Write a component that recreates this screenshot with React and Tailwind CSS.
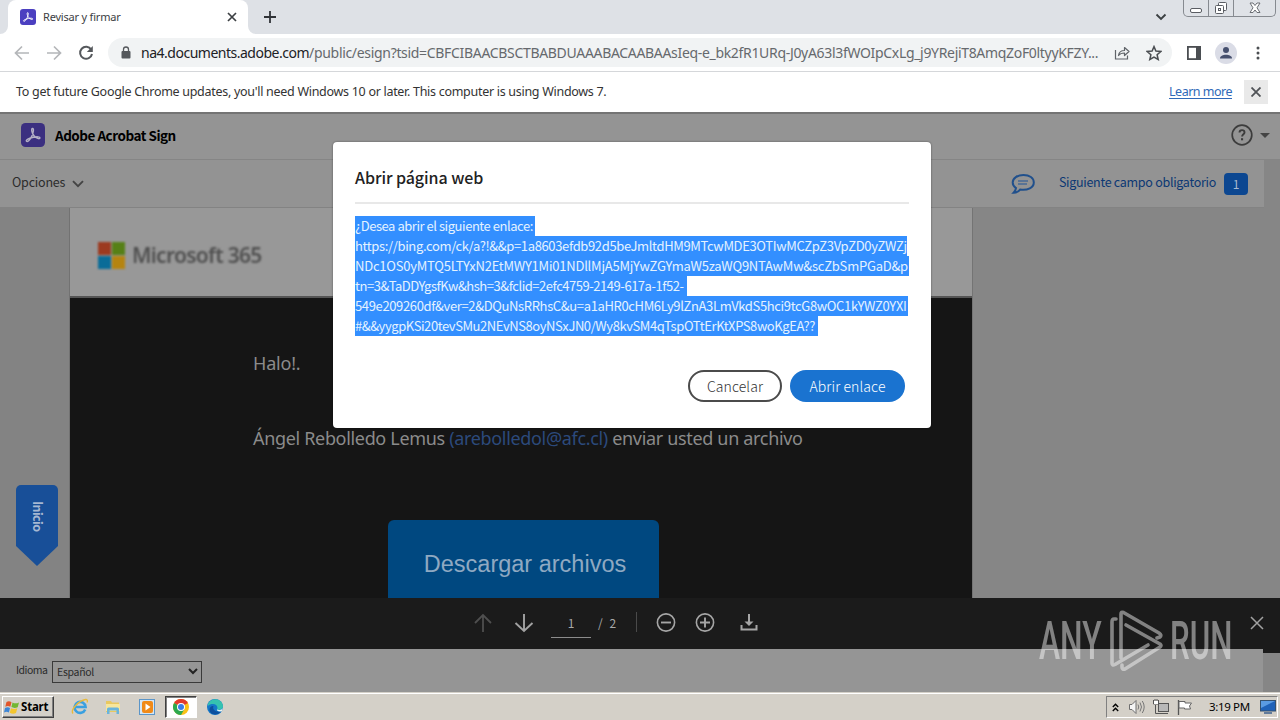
import React from 'react'

const ui = "font-['Noto_Sans',sans-serif]"
const clean = "font-['Noto_Sans_CJK_SC',sans-serif]"

const linkLines = [
  { text: '¿Desea abrir el siguiente enlace:', box: 'w-[180px]', track: 'tracking-[-0.46px]' },
  { text: 'https://bing.com/ck/a?!&&p=1a8603efdb92d5beJmltdHM9MTcwMDE3OTIwMCZpZ3VpZD0yZWZj', box: 'w-[552px]', track: 'tracking-[-0.36px]' },
  { text: 'NDc1OS0yMTQ5LTYxN2EtMWY1Mi01NDllMjA5MjYwZGYmaW5zaWQ9NTAwMw&scZbSmPGaD&p', box: 'w-[554px]', track: 'tracking-[-0.23px]' },
  { text: 'tn=3&TaDDYgsfKw&hsh=3&fclid=2efc4759-2149-617a-1f52-', box: 'w-[332px]', track: 'tracking-[-0.47px]' },
  { text: '549e209260df&ver=2&DQuNsRRhsC&u=a1aHR0cHM6Ly9lZnA3LmVkdS5hci9tcG8wOC1kYWZ0YXI', box: 'w-[553px]', track: 'tracking-[-0.36px]' },
  { text: '#&&yygpKSi20tevSMu2NEvNS8oyNSxJN0/Wy8kvSM4qTspOTtErKtXPS8woKgEA??', box: 'w-[463px]', track: 'tracking-[-0.43px]' },
]

const AcrobatMark = ({ className, bg, line }) => (
  <svg viewBox="0 0 24 24" className={className}>
    <rect width="24" height="24" rx="4.5" fill={bg} />
    <path
      d="M5.5 18.3c-1.300-1 2.500-3.200 7-4.100 3.500-.7 6.600-.5 6.500.8-.2 1.600-3.700.3-6-2.300-2.200-2.500-3-6.900-1.500-7.200 1.700-.3.900 4.300-.8 7.900-1.500 3.200-4.100 5.800-5.200 4.900z"
      fill="none"
      stroke={line}
      strokeWidth="1.400"
    />
  </svg>
)

const TabStrip = () => (
  <div className="flex h-[34px] shrink-0 items-start bg-[#dee1e6]">
    <div className="relative ml-2 flex h-[34px] w-60 items-center rounded-t-lg bg-white">
      <svg viewBox="0 0 8 8" className="absolute bottom-0 -left-2 size-2"><path d="M8 0v8H0a8 8 0 0 0 8-8z" fill="#fff" /></svg>
      <svg viewBox="0 0 8 8" className="absolute -right-2 bottom-0 size-2"><path d="M0 0v8h8a8 8 0 0 1-8-8z" fill="#fff" /></svg>
      <AcrobatMark className="ml-3 size-4" bg="#4b3fc0" line="#fff" />
      <span className="ml-[7px] text-[11px] tracking-[-0.2px] text-[#3c4043]">Revisar y firmar</span>
      <svg viewBox="0 0 10 10" className="mr-[11px] ml-auto size-[10px]"><path d="M1 1l8 8M9 1l-8 8" stroke="#3c4043" strokeWidth="1.700" /></svg>
    </div>
    <svg viewBox="0 0 12 12" className="mt-[11px] ml-4 size-3"><path d="M6 0v12M0 6h12" stroke="#303338" strokeWidth="1.800" /></svg>
    <svg viewBox="0 0 12 8" className="mt-[13px] mr-4 ml-auto h-2 w-3"><path d="M1.500 1.500L6 6l4.500-4.500" fill="none" stroke="#3c4043" strokeWidth="1.900" /></svg>
    <div className="mr-1 flex h-[17px] w-[93px] rounded-b-[5px] border border-t-0 border-[#868a90] bg-[#dfe2e7]">
      <div className="w-[25px] border-r border-[#868a90]">
        <svg viewBox="0 0 24 16" className="h-4 w-6"><rect x="6.500" y="8.500" width="11" height="4" rx="1.500" fill="#fff" stroke="#5a5d63" /></svg>
      </div>
      <div className="w-[25px] border-r border-[#868a90]">
        <svg viewBox="0 0 24 16" className="h-4 w-6">
          <rect x="9.500" y="2.500" width="8" height="8" rx="1" fill="#fff" stroke="#5a5d63" />
          <rect x="6.500" y="5.500" width="8" height="8" rx="1" fill="#fff" stroke="#5a5d63" />
          <rect x="9.500" y="8.500" width="2" height="2" fill="none" stroke="#5a5d63" />
        </svg>
      </div>
      <svg viewBox="0 0 41 16" className="h-4 w-[41px]">
        <path d="M16 3h3l2 2.500L23 3h3l-3 4.800 3 4.700h-3L21 10l-2 2.500h-3l3-4.700z" fill="#fff" stroke="#6b6e74" />
      </svg>
    </div>
  </div>
)

const Toolbar = () => (
  <div className="flex h-[38px] shrink-0 items-center border-b border-[#d5d7da] bg-white">
    <svg viewBox="0 0 16 16" className="ml-[14px] size-4"><path d="M15 8H2M8 1.500L1.500 8 8 14.500" fill="none" stroke="#b4b6b9" strokeWidth="1.700" /></svg>
    <svg viewBox="0 0 16 16" className="ml-4 size-4"><path d="M1 8h13M8 1.500L14.500 8 8 14.500" fill="none" stroke="#b4b6b9" strokeWidth="1.700" /></svg>
    <svg viewBox="0 0 16 16" className="ml-4 size-4">
      <path d="M13.200 4.600A6 6 0 1 0 14 9" fill="none" stroke="#55585c" strokeWidth="2" />
      <path d="M14.800 1v6H8.800z" fill="#55585c" />
    </svg>
    <div className="ml-[14px] flex h-[29px] w-[1064px] items-center rounded-full bg-[#f1f3f4]">
      <svg viewBox="0 0 10 14" className="ml-[13px] h-[14px] w-[10px]">
        <rect x="0.500" y="5" width="9" height="7.500" rx="1" fill="#55585c" />
        <path d="M2.500 6V3.500a2.500 2.500 0 0 1 5 0V6" fill="none" stroke="#55585c" strokeWidth="1.300" />
      </svg>
      <div className="ml-[10px] w-[970px] text-[14px] leading-[20px] whitespace-nowrap text-[#66696d]">
        <span className="tracking-[-0.49px] text-[#202124]">na4.documents.adobe.com</span>
        <span className="tracking-[-0.32px]">/public/esign?tsid=CBFCIBAACBSCTBABDUAAABACAABAAsIeq-e_bk2fR1URq-J0yA63l3fWOIpCxLg_j9YRejiT8AmqZoF0ltyyKFZY...</span>
      </div>
      <svg viewBox="0 0 16 16" className="ml-[3px] size-4 shrink-0">
        <path d="M1.500 5v9h12v-3.500" fill="none" stroke="#5f6368" strokeWidth="1.200" />
        <path d="M4.500 10.500c.5-3.500 2.500-5 6-5V2.500L15 6.500l-4.500 4V8c-2.500 0-4.500.5-6 2.500z" fill="none" stroke="#5f6368" strokeWidth="1.200" strokeLinejoin="round" />
      </svg>
      <svg viewBox="0 0 16 16" className="ml-4 size-4 shrink-0">
        <path d="M8 1.600l1.900 4.500 4.900.4-3.700 3.200 1.100 4.800L8 12l-4.200 2.500 1.100-4.800L1.200 6.500l4.900-.4z" fill="none" stroke="#4b4e52" strokeWidth="1.500" />
      </svg>
    </div>
    <svg viewBox="0 0 14 14" className="ml-[15px] size-[14px]">
      <rect x="0.900" y="0.900" width="12.200" height="12.200" fill="none" stroke="#4b4e52" strokeWidth="1.800" />
      <rect x="9" y="1" width="4.500" height="12" fill="#4b4e52" />
    </svg>
    <svg viewBox="0 0 22 22" className="ml-[14px] size-[22px]">
      <circle cx="11" cy="11" r="11" fill="#dadce6" />
      <circle cx="11" cy="8" r="3" fill="#46506e" />
      <path d="M5 16.500c0-5 12-5 12 0z" fill="#46506e" />
    </svg>
    <svg viewBox="0 0 4 14" className="ml-[19px] h-[14px] w-1" fill="#4b4e52">
      <circle cx="2" cy="2" r="1.500" /><circle cx="2" cy="7" r="1.500" /><circle cx="2" cy="12" r="1.500" />
    </svg>
  </div>
)

const InfoBar = () => (
  <div className="flex h-10 shrink-0 items-center bg-white text-[12.500px]">
    <span className="ml-4 w-[594px] whitespace-nowrap tracking-[-0.29px] text-[#333]">
      To get future Google Chrome updates, you'll need Windows 10 or later. This computer is using Windows 7.
    </span>
    <span className="ml-auto tracking-[-0.5px] text-[#2f69b8] underline underline-offset-2">Learn more</span>
    <div className="mr-3 ml-3 flex size-6 items-center justify-center bg-[#e9e9e9]">
      <svg viewBox="0 0 10 10" className="size-[10px]"><path d="M.5.500l9 9M9.500.500l-9 9" stroke="#505357" strokeWidth="1.800" /></svg>
    </div>
  </div>
)

const SignHeader = () => (
  <div className={`flex h-[48px] shrink-0 items-center border-t-2 border-b border-t-[#747474] border-b-[#858585] bg-[#949494] pb-[3px] ${clean}`}>
    <AcrobatMark className="ml-[21px] size-6" bg="#3b2f80" line="#b4b0c6" />
    <span className="ml-[10px] text-[13.500px] font-bold tracking-[-0.49px] text-black">Adobe Acrobat Sign</span>
    <svg viewBox="0 0 22 22" className="ml-auto size-[22px]">
      <circle cx="11" cy="11" r="9.800" fill="none" stroke="#3c3c3c" strokeWidth="1.700" />
      <path d="M8.500 8.600c0-3.400 5-3.200 5-.2 0 1.800-2.400 2-2.400 4.200" fill="none" stroke="#3c3c3c" strokeWidth="1.900" />
      <rect x="10" y="14.200" width="2.100" height="2.100" fill="#3c3c3c" />
    </svg>
    <svg viewBox="0 0 10 5" className="mr-[10px] ml-[7px] h-[5px] w-[10px]"><path d="M0 0h10L5 5z" fill="#444" /></svg>
  </div>
)

const OptionsBar = () => (
  <div className={`flex h-12 shrink-0 bg-[#868686] ${clean}`}>
    <div className="flex w-[1264px] items-center border-b border-[#838383] bg-[#939393]">
      <span className="ml-3 pb-0.5 text-[12.500px] tracking-[-0.2px] text-[#2c2c2c]">Opciones</span>
      <svg viewBox="0 0 12 8" className="ml-[7px] h-2 w-3"><path d="M1 1.200l5 5 5-5" fill="none" stroke="#444" strokeWidth="1.900" /></svg>
      <svg viewBox="0 0 24 22" className="ml-auto h-[22px] w-6">
        <path d="M12.500 2C6.500 2 1.700 5 1.700 9.500c0 2.300 1.300 4.300 3.300 5.600-.3 1.700-1 3.200-2.400 4.600 2.600 0 4.900-1 6.500-3.100 7.500 1.200 13.700-2 13.700-7.100C22.800 5 18.500 2 12.500 2z" fill="none" stroke="#21508c" strokeWidth="2" />
        <path d="M7 8h10M7 11h9" stroke="#476a96" strokeWidth="1.300" />
      </svg>
      <span className="ml-6 pb-0.5 text-[12.500px] tracking-[-0.28px] text-[#0c3874]">Siguiente campo obligatorio</span>
      <span className="mr-4 ml-2 flex h-[22px] w-6 items-center justify-center rounded-sm bg-[#0c4791] text-[12px] text-[#a9b9d0]">1</span>
    </div>
  </div>
)

const Document = () => (
  <div className="flex h-[390px] shrink-0 bg-[#868686]">
    <div className="flex w-[70px] flex-col border-r border-[#727272] bg-[#838383] pt-[277px] pl-4">
      <svg viewBox="0 0 42 82" className="h-[82px] w-[42px]">
        <path d="M5 0h32a5 5 0 0 1 5 5v56L21 81 0 61V5a5 5 0 0 1 5-5z" fill="#184f98" />
        <text x="0" y="0" transform="translate(16.500 16) rotate(90)" fontSize="12.500" fontWeight="700" fill="#a6b8d2" textLength="31" className={clean}>Inicio</text>
      </svg>
    </div>
    <div className="flex w-[902px] flex-col overflow-hidden bg-[#151515]">
      <div className="flex h-[90px] shrink-0 items-center border-b-2 border-[#555] bg-[#989898] pt-[6px] pl-7">
        <div className="grid grid-cols-2 gap-px blur-[0.9px]">
          <div className="size-[13px] bg-[#9c3a20]" />
          <div className="size-[13px] bg-[#568016]" />
          <div className="size-[13px] bg-[#0a6c98]" />
          <div className="size-[13px] bg-[#b58410]" />
        </div>
        <span className="ml-[7px] pt-0.5 text-[21px] font-semibold tracking-[-0.7px] text-[#505050] blur-[0.9px]">Microsoft 365</span>
      </div>
      <div className="flex flex-col items-start pt-[51px] pl-[183px] text-[18px] leading-[28px] whitespace-nowrap text-[#8b8b8b]">
        <p className="tracking-[-0.2px]">Halo!.</p>
        <p className="mt-[47px] tracking-[-0.33px]">
          Ángel Rebolledo Lemus <span className="text-[#2c4a7c]">(arebolledol@afc.cl)</span> enviar usted un archivo
        </p>
      </div>
      <div className="mt-[68px] ml-[318px] flex h-[90px] w-[271px] shrink-0 items-center justify-center rounded-md bg-[#004880] pl-[3px] font-['Liberation_Sans',sans-serif] text-[23.500px] text-[#8fa9c2]">
        Descargar archivos
      </div>
    </div>
    <div className="w-px bg-[#747474]" />
  </div>
)

const PageControls = () => (
  <div className={`flex h-[55px] shrink-0 items-start bg-[#1b1b1b] pt-[14px] pl-[472px] text-[12px] text-[#a8a8a8] ${clean}`}>
    <svg viewBox="0 0 22 22" className="size-[22px]"><path d="M11 3v17M3 11l8-8 8 8" fill="none" stroke="#4f4f4f" strokeWidth="1.800" /></svg>
    <svg viewBox="0 0 22 22" className="ml-[19px] size-[22px]"><path d="M11 2v17M2.500 11l8.500 8 8.500-8" fill="none" stroke="#a2a2a2" strokeWidth="1.900" /></svg>
    <span className="ml-4 h-[26px] w-10 border-b border-[#8c8c8c] text-center leading-[22px]">1</span>
    <span className="ml-[7px] w-5 leading-[22px] tracking-[0.5px] whitespace-pre">/  2</span>
    <div className="ml-[18px] h-5 w-px bg-[#4a4a4a]" />
    <svg viewBox="0 0 20 20" className="mt-px ml-[19px] size-5" fill="none" stroke="#a6a6a6" strokeWidth="1.600"><circle cx="10" cy="9.500" r="8.600" /><path d="M5 9.500h10" strokeWidth="1.900" /></svg>
    <svg viewBox="0 0 20 20" className="mt-px ml-[19px] size-5" fill="none" stroke="#a6a6a6" strokeWidth="1.600"><circle cx="10" cy="9.500" r="8.600" /><path d="M5 9.500h10M10 4.500v10" strokeWidth="1.900" /></svg>
    <svg viewBox="0 0 18 18" className="mt-0.5 ml-[25px] size-[18px]"><path d="M9 0v11M1.500 11v4.500h15V11" fill="none" stroke="#a6a6a6" strokeWidth="2" /><path d="M4.500 7.500h9L9 12z" fill="#a6a6a6" /></svg>
    <svg viewBox="0 0 14 14" className="mt-1 mr-4 ml-auto size-[14px]"><path d="M1 1l12 12M13 1L1 13" stroke="#a2a2a2" strokeWidth="1.500" /></svg>
  </div>
)

const LanguageBar = () => (
  <div className={`flex h-[39px] shrink-0 bg-[#868686] text-[#2b2b2b] ${clean}`}>
    <div className="relative -mt-1 flex h-[43px] w-[1263px] items-center bg-[#959595] pt-[2px]">
      <span className="ml-4 w-[31px] pb-0.5 text-[10.500px] leading-none tracking-[-0.5px] whitespace-nowrap">Idioma</span>
      <div className="ml-[5px] flex h-[22px] w-[150px] items-center border border-[#3a3a3a] bg-[#969696] pr-[3px] pl-1 text-[10.500px] tracking-[-0.3px]">
        Español
        <svg viewBox="0 0 10 7" className="ml-auto h-[7px] w-[10px]"><path d="M1 1l4 4 4-4" fill="none" stroke="#222" strokeWidth="2" /></svg>
      </div>
    </div>
  </div>
)

const Watermark = () => (
  <div className="absolute top-[609px] left-[1039px] flex h-[64px] w-[194px] items-center font-['Roboto',sans-serif] text-[53px] leading-[64px] font-medium text-white opacity-45">
    <span className="w-[63px] origin-left scale-x-[0.600]">ANY</span>
    <svg viewBox="0 0 56 62" className="ml-[7px] h-[62px] w-14 shrink-0" fill="none" stroke="#fff" strokeWidth="3.600" strokeLinejoin="round" strokeLinecap="round">
      <path d="M12 48V4q0-2.500 2.500-1.500L50 23q3 2 1 4l-3 1" />
      <path d="M17 15L51 34q2 1.500 0 3L16 59q-3 1-3-2v-2" />
      <path d="M7 9H5q-2 0-2 3v41q0 3 3 1.500L39 35" />
    </svg>
    <span className="ml-[5px] w-[62px] origin-left scale-x-[0.590]">RUN</span>
  </div>
)

const Dialog = () => (
  <div className={`absolute top-[142px] left-[333px] flex h-[286px] w-[598px] flex-col rounded bg-white px-[22px] shadow-[0_0_2px_rgba(0,0,0,0.5)] ${clean}`}>
    <h2 className="mt-[22px] h-[26px] text-[16px] leading-[26px] font-medium tracking-[-0.06px] text-[#222]">Abrir página web</h2>
    <div className="mt-3 h-[2px] w-[554px] bg-[#e8e8e8]" />
    <div className="mt-3 text-[13px] leading-[19px] whitespace-nowrap text-[#e4f2ff]">
      {linkLines.map((line) => (
        <div key={line.text} className={`h-5 bg-[#338fff] ${line.box} ${line.track}`}>{line.text}</div>
      ))}
    </div>
    <div className="mt-[34px] mr-1 flex justify-end gap-2 text-[14px] font-light">
      <button className="h-8 w-[94px] rounded-full border-2 border-[#4b4b4b] leading-[28px] tracking-[0.1px] text-[#333]">Cancelar</button>
      <button className="h-8 w-[115px] rounded-full bg-[#1a73d0] leading-[32px] tracking-[0.1px] text-white">Abrir enlace</button>
    </div>
  </div>
)

const Taskbar = () => (
  <div className="flex h-7 shrink-0 border-t border-[#d4d0c8] bg-[#d4d0c8] font-['Noto_Sans',sans-serif]">
    <div className="flex w-full items-start border-t border-white pt-[2px]">
      <div className="ml-[2px] flex h-[22px] w-[52px] items-center border border-t-white border-r-[#404040] border-b-[#404040] border-l-white pl-px shadow-[inset_-1px_-1px_0_#808080]">
        <svg viewBox="0 0 16 16" className="size-4">
          <path d="M2.500 3q2.500-1.500 5 .2l-1.200 4.600q-2.300-1.500-5 0z" fill="#e2562a" />
          <path d="M8.500 3.500q3 1.700 6.500 0l-1.300 4.700q-3.200 1.500-6.300-.1z" fill="#72b733" />
          <path d="M1 9q2.700-1.500 5 0L4.900 13.500q-2.400-1.600-4.900 0z" fill="#3d86d6" />
          <path d="M7 9.200q3 1.600 6.300.1L12 14q-3.200 1.400-6.200-.3z" fill="#f3c52d" />
        </svg>
        <span className="ml-px text-[11.500px] font-bold tracking-[-0.2px] text-black">Start</span>
      </div>
      <svg viewBox="0 0 18 18" className="mt-[2px] ml-[17px] size-[18px]">
        <path d="M14.200 11.500A5.500 5.500 0 1 1 14.600 9H5" fill="none" stroke="#3aa0e0" strokeWidth="2.600" />
        <path d="M2 15.500C-1 12 8 2.500 14.500 1.500c2-.2 2.300 1.500 1.500 3" fill="none" stroke="#e8b93a" strokeWidth="1.300" />
      </svg>
      <svg viewBox="0 0 18 18" className="mt-[2px] ml-[15px] size-[18px]">
        <path d="M2 3h5l1 1.500h7V14H2z" fill="#e9c860" />
        <path d="M2 6h14v7H2z" fill="#f7e69c" />
        <path d="M3 16v-5q0-1.500 1.500-1.500h9q1.500 0 1.500 1.500v5h-2.500v-3.500h-7V16z" fill="#69b4dc" />
      </svg>
      <svg viewBox="0 0 18 18" className="mt-[2px] ml-4 size-[18px]">
        <rect x="1.500" y="1.500" width="15" height="15" fill="#d4e6f5" stroke="#5b95c8" />
        <rect x="4" y="3" width="11" height="12" rx="2" fill="#f08a18" />
        <path d="M7.500 5.500v7l5-3.500z" fill="#fff" />
      </svg>
      <div className="ml-[9px] flex h-[22px] w-8 items-center justify-center border border-t-[#404040] border-r-white border-b-white border-l-[#404040] bg-white shadow-[inset_1px_1px_0_#808080]">
        <svg viewBox="0 0 16 16" className="size-4">
          <circle cx="8" cy="8" r="8" fill="#fbc116" />
          <path d="M8 8L1.070 4A8 8 0 0 1 14.930 4z" fill="#e33b2e" />
          <path d="M8 8L1.070 4A8 8 0 0 0 8 16l3.500-6z" fill="#2da94f" />
          <circle cx="8" cy="8" r="4" fill="#fff" />
          <circle cx="8" cy="8" r="3" fill="#3b7de8" />
        </svg>
      </div>
      <svg viewBox="0 0 18 18" className="mt-[2px] ml-[9px] size-[18px]">
        <circle cx="9" cy="9" r="8" fill="#1477c8" />
        <path d="M2 6C5-1 16 0 17 8c.2 3-3 4.500-6 3.500 1.500-3-1-5.500-4-5.500-2 0-4 .5-5 2z" fill="#35c2b0" />
        <path d="M7.500 8c-1.500 3 1.500 6.500 7.500 5.500C12 18 3 17.500 3.500 11 4 8.500 6 8 7.500 8z" fill="#0d4f9e" />
        <path d="M17 9c-.3 2.600-3 3.500-6 2.600-.8 1 2 2.800 5 1.400z" fill="#e8f4f4" />
      </svg>
      <div className="mr-[2px] ml-auto flex h-[22px] w-[172px] items-center border border-t-[#808080] border-r-white border-b-white border-l-[#808080]">
        <svg viewBox="0 0 7 9" className="ml-[5px] h-[9px] w-[7px]"><path d="M.8 4L3.500 1.300 6.200 4M.8 8l2.700-2.700L6.200 8" fill="none" stroke="#000" strokeWidth="1.400" /></svg>
        <svg viewBox="0 0 18 16" className="ml-[9px] h-4 w-[18px]">
          <path d="M1.500 5.500H4l4-4v13l-4-4H1.500z" fill="#f5f5f5" stroke="#6e6e6e" />
          <path d="M10 5.500q1.500 2.500 0 5M12 3.500q3 4.500 0 9M14.300 2q3.800 6 0 12" fill="none" stroke="#777" />
        </svg>
        <svg viewBox="0 0 18 16" className="ml-[6px] h-4 w-[18px]">
          <rect x="6.500" y="4.500" width="10" height="8" fill="#b8b8b8" stroke="#555" />
          <path d="M6 14.500h10M3.500 6v8.500h3M1.500 1v4h5V1M3 0v2M5 0v2" fill="none" stroke="#555" />
          <rect x="2" y="2" width="4" height="3" fill="#fff" />
        </svg>
        <svg viewBox="0 0 16 16" className="ml-[6px] size-4">
          <path d="M2.500 1v15" stroke="#555" strokeWidth="1.300" />
          <path d="M3 2.500h6v1.500h6.500l-2 3 1 3H8.500V9H3z" fill="#fff" stroke="#666" />
        </svg>
        <span className="ml-[17px] text-[11.500px] tracking-[-0.35px] whitespace-nowrap text-black">3:19 PM</span>
        <svg viewBox="0 0 16 14" className="mr-px ml-auto h-[14px] w-4">
          <rect x="0.500" y="0.500" width="15" height="10.500" fill="#1f62b8" stroke="#34516f" />
          <path d="M1 1h14L1 8z" fill="#5a9be2" />
          <path d="M4 13h8" stroke="#3b5f8c" strokeWidth="1.500" />
        </svg>
      </div>
    </div>
  </div>
)

const App = () => {
  return (
    <div className={`relative flex h-[720px] w-[1280px] flex-col overflow-hidden bg-[#868686] ${ui}`}>
      <TabStrip />
      <Toolbar />
      <InfoBar />
      <SignHeader />
      <OptionsBar />
      <Document />
      <PageControls />
      <LanguageBar />
      <Taskbar />
      <Dialog />
      <Watermark />
    </div>
  )
}

export default App
